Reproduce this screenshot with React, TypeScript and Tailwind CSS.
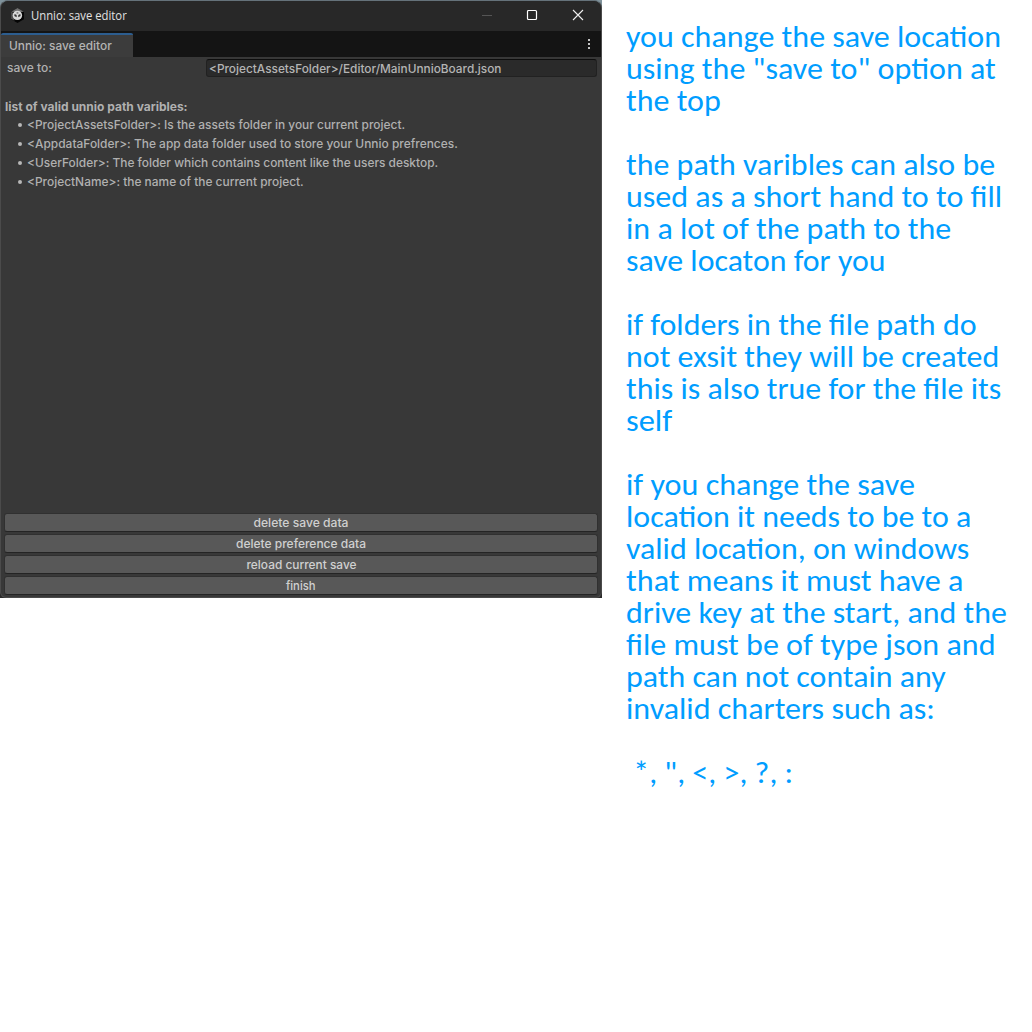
import { useLayoutEffect, useRef, useState } from "react";

type FitProps = { text: string; width: number; className?: string };

// Keeps a line of text at a fixed advance width, whatever the font's own metrics.
function Fit({ text, width, className = "" }: FitProps) {
  const ref = useRef<HTMLSpanElement>(null);
  const [scale, setScale] = useState(1);
  useLayoutEffect(() => {
    if (ref.current) setScale(width / ref.current.offsetWidth);
  }, [text, width]);
  return (
    <span
      ref={ref}
      className={`inline-block w-max origin-left whitespace-pre ${className}`}
      style={{ transform: `scaleX(${scale})` }}
    >
      {text}
    </span>
  );
}

const variables = [
  { text: "<ProjectAssetsFolder>: Is the assets folder in your current project.", width: 378 },
  { text: "<AppdataFolder>: The app data folder used to store your Unnio prefrences.", width: 431 },
  { text: "<UserFolder>: The folder which contains content like the users desktop.", width: 411 },
  { text: "<ProjectName>: the name of the current project.", width: 277 },
];

const actions = [
  { text: "delete save data", width: 95 },
  { text: "delete preference data", width: 130 },
  { text: "reload current save", width: 110 },
  { text: "finish", width: 30 },
];

const notes = [
  [
    { text: "you change the save location", width: 375 },
    { text: 'using the "save to" option at', width: 370 },
    { text: "the top", width: 95 },
  ],
  [
    { text: "the path varibles can also be", width: 369 },
    { text: "used as a short hand to to fill", width: 376 },
    { text: "in a lot of the path to the", width: 325 },
    { text: "save locaton for you", width: 259 },
  ],
  [
    { text: "if folders in the file path do", width: 351 },
    { text: "not exsit they will be created", width: 373 },
    { text: "this is also true for the file its", width: 375 },
    { text: "self", width: 46 },
  ],
  [
    { text: "if you change the save", width: 289 },
    { text: "location it needs to be to a", width: 345 },
    { text: "valid location, on windows", width: 343 },
    { text: "that means it must have a", width: 337 },
    { text: "drive key at the start, and the", width: 381 },
    { text: "file must be of type json and", width: 369 },
    { text: "path can not contain any", width: 320 },
    { text: "invalid charters such as:", width: 309 },
  ],
  [{ text: ' *, ", <, >, ?, :', width: 167 }],
];

function UnityIcon() {
  return (
    <svg className="ml-[9px] size-[15px]" viewBox="0 0 14 14">
      <path d="M7 0 13 3.4v7L7 14 1 10.4v-7z" fill="#050505" />
      <path d="M7 0 13 3.4 7 4 1 3.4z" fill="#707070" />
      <path d="M1 3.4 4 5v6.8l-3-1.8z" fill="#505050" />
      <circle cx="6.9" cy="6.9" r="4.4" fill="#d9d9d9" />
      <path d="M4.3 5.5 6.2 6.6v2.1L4 7.4zM9.6 5.5 7.7 6.6v2.1l2.2-1.3z" fill="#343434" />
      <path d="m5.6 4.6 1.4-.8 1.3.8-1.3.8z" fill="#777" />
    </svg>
  );
}

function TitleBar() {
  return (
    <div className="flex h-[30px] items-center bg-[#282828] pb-[2px]">
      <UnityIcon />
      <div className="mt-px ml-[6px] font-['Open_Sans',sans-serif] text-[12px] leading-[16px] text-[#e2e2e2]">
        <Fit text="Unnio: save editor" width={96} />
      </div>
      <svg className="ml-auto mr-[17px] h-[12px] w-[103px]" viewBox="0 0 103 12" fill="none">
        <path d="M1 6.5h10" stroke="#555" />
        <rect x="46.5" y="1.5" width="9" height="9" rx="1" stroke="#fff" strokeWidth="1.2" />
        <path d="m92 1 10 10M102 1 92 11" stroke="#eee" strokeWidth="1.1" />
      </svg>
    </div>
  );
}

function TabBar() {
  return (
    <div className="flex h-[26px] items-end justify-between bg-[#141414]">
      <div className="h-[24px] w-[132px] rounded-t-[2px] border-t-2 border-[#2c5d8f] bg-[#3c3c3c] pl-[8px] leading-[22px] text-[#b4b4b4]">
        <Fit text="Unnio: save editor" width={103} />
      </div>
      <div className="mr-[11px] flex h-[26px] flex-col items-center justify-center gap-[2px]">
        <i className="size-[2px] bg-[#c4c4c4]" />
        <i className="size-[2px] bg-[#c4c4c4]" />
        <i className="size-[2px] bg-[#c4c4c4]" />
      </div>
    </div>
  );
}

function EditorWindow() {
  return (
    <section className="h-[598px] w-[602px] shrink-0 bg-[linear-gradient(#7f929b_50%,#2a2a2a_50%)]">
      <div className="flex h-[598px] flex-col overflow-hidden rounded-t-[8px] rounded-b-[6px] border border-[#4b4b4b] border-t-[#65727a] bg-[#383838] font-['Inter',sans-serif] text-[12px] font-medium text-[#b0b0b0]">
        <TitleBar />
        <TabBar />
        <div className="flex h-[21px] items-start pr-[4px] pl-[6px]">
          <div className="w-[199px] leading-[21px]">
            <Fit text="save to:" width={45} />
          </div>
          <div className="mt-[2px] h-[18px] flex-1 rounded-[3px] border border-[#212121] border-t-[#0d0d0d] bg-[#2a2a2a] pl-[2px] leading-[17px] text-[#b4b4b4]">
            <Fit text="<ProjectAssetsFolder>/Editor/MainUnnioBoard.json" width={292} />
          </div>
        </div>
        <div className="mt-[20px] pl-[4px] font-bold leading-[18px]">
          <Fit text="list of valid unnio path varibles:" width={183} />
        </div>
        <ul className="-mt-px pl-[17px]">
          {variables.map((v) => (
            <li key={v.text} className="flex h-[19px] items-center leading-[19px]">
              <i className="mr-[5px] size-[4px] rounded-full bg-[#b8b8b8]" />
              <Fit text={v.text} width={v.width} />
            </li>
          ))}
        </ul>
        <div className="mt-auto mb-[2px] flex flex-col gap-[2px] pr-[3px] pl-[3px]">
          {actions.map((a) => (
            <button
              key={a.text}
              className="flex h-[19px] items-center justify-center rounded-[3px] border border-[#303030] border-b-[#242424] bg-[#585858] leading-[17px] font-medium text-[#d0d0d0]"
            >
              <Fit text={a.text} width={a.width} className="origin-center!" />
            </button>
          ))}
        </div>
      </div>
    </section>
  );
}

export default function App() {
  return (
    <main className="flex h-[1032px] w-[1032px] items-start overflow-hidden bg-white">
      <EditorWindow />
      <aside className="mt-[20px] ml-[24px] flex flex-col gap-[32px] font-['Carlito','Noto_Sans',sans-serif] text-[31px] leading-[32px] text-[#009dff]">
        {notes.map((lines) => (
          <div key={lines[0].text} className="flex flex-col">
            {lines.map((l) => (
              <Fit key={l.text} text={l.text} width={l.width} />
            ))}
          </div>
        ))}
      </aside>
    </main>
  );
}
